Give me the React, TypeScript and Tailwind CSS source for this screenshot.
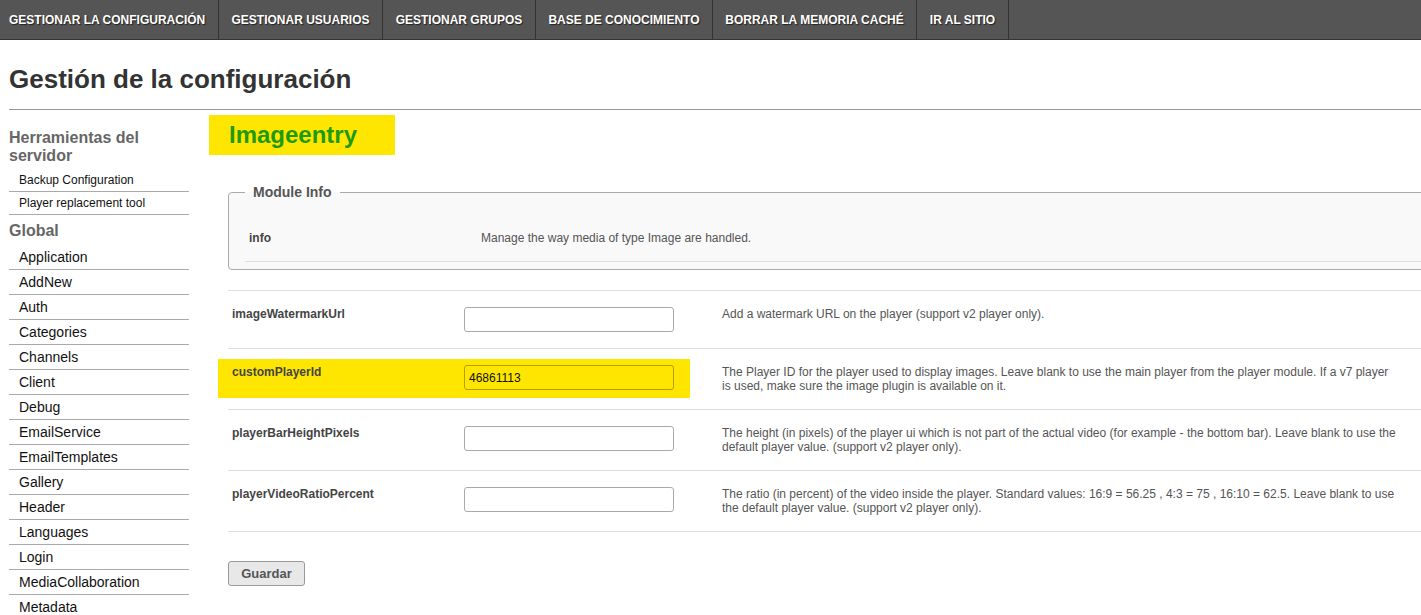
import React from "react";

const navItems: { label: string; w: string }[] = [
  { label: "GESTIONAR LA CONFIGURACIÓN", w: "w-[219px] justify-start pl-[9px]" },
  { label: "GESTIONAR USUARIOS", w: "w-[164px] justify-center" },
  { label: "GESTIONAR GRUPOS", w: "w-[153px] justify-center" },
  { label: "BASE DE CONOCIMIENTO", w: "w-[177px] justify-center" },
  { label: "BORRAR LA MEMORIA CACHÉ", w: "w-[204px] justify-center" },
  { label: "IR AL SITIO", w: "w-[92px] justify-center" },
];

const toolItems = ["Backup Configuration", "Player replacement tool"];
const globalItems = [
  "Application",
  "AddNew",
  "Auth",
  "Categories",
  "Channels",
  "Client",
  "Debug",
  "EmailService",
  "EmailTemplates",
  "Gallery",
  "Header",
  "Languages",
  "Login",
  "MediaCollaboration",
  "Metadata",
  "Moderation",
];

const rows: { label: string; value: string; desc: string; hl?: boolean }[] = [
  {
    label: "imageWatermarkUrl",
    value: "",
    desc: "Add a watermark URL on the player (support v2 player only).",
  },
  {
    label: "customPlayerId",
    value: "46861113",
    desc: "The Player ID for the player used to display images. Leave blank to use the main player from the player module. If a v7 player is used, make sure the image plugin is available on it.",
    hl: true,
  },
  {
    label: "playerBarHeightPixels",
    value: "",
    desc: "The height (in pixels) of the player ui which is not part of the actual video (for example - the bottom bar). Leave blank to use the default player value. (support v2 player only).",
  },
  {
    label: "playerVideoRatioPercent",
    value: "",
    desc: "The ratio (in percent) of the video inside the player. Standard values: 16:9 = 56.25 , 4:3 = 75 , 16:10 = 62.5. Leave blank to use the default player value. (support v2 player only).",
  },
];

export default function App() {
  return (
    <div className="w-full overflow-hidden bg-white font-['Liberation_Sans',Arial,sans-serif] text-[#333]">
      {/* Top nav */}
      <div className="flex h-[40px] bg-[#555] border-b border-[#333]">
        {navItems.map((n) => (
          <div
            key={n.label}
            className={`${n.w} flex h-full items-center border-r border-[#333] text-[12px] font-bold text-white [text-shadow:1px_1px_1px_#222] whitespace-nowrap`}
          >
            {n.label}
          </div>
        ))}
      </div>

      <div className="pl-[9px]">
        <h1 className="mt-[24px] text-[26px] leading-[30px] font-bold text-[#333]">
          Gestión de la configuración
        </h1>
        <div className="mt-[15px] h-px bg-[#999]" />

        <div className="flex">
          {/* Sidebar */}
          <div className="w-[180px] shrink-0 pt-[19px]">
            <div className="text-[16px] leading-[18px] font-bold text-[#666]">
              Herramientas del servidor
            </div>
            <div className="mt-[4px]">
              {toolItems.map((t) => (
                <div
                  key={t}
                  className="flex h-[23px] items-center border-b border-[#aaa] pl-[10px] text-[12px] text-[#111]"
                >
                  {t}
                </div>
              ))}
            </div>
            <div className="mt-[7px] text-[16px] leading-[18px] font-bold text-[#666]">
              Global
            </div>
            <div className="mt-[5px]">
              {globalItems.map((t) => (
                <div
                  key={t}
                  className="flex h-[25px] items-center border-b border-[#aaa] pl-[10px] text-[14px] text-[#111]"
                >
                  {t}
                </div>
              ))}
            </div>
          </div>

          {/* Main */}
          <div className="ml-[39px] min-w-0 flex-1">
            <div className="mt-[5px] -ml-[19px] flex h-[40px] w-[186px] items-center bg-[#ffe600] pl-[20px] text-[24px] font-bold text-[#1f9a0c]">
              Imageentry
            </div>

            <fieldset className="mt-[29px] -mr-[20px] rounded-[4px] border border-[#aaa] bg-[#f9f9f9] pl-[16px] pt-[15px] pb-[7px]">
              <legend className="px-[8px] text-[14px] leading-[16px] font-bold text-[#555]">
                Module Info
              </legend>
              <div className="flex border-b border-[#ddd] py-[16px]">
                <div className="w-[236px] shrink-0 pl-[4px] text-[12px] leading-[14px] font-bold text-[#444]">
                  info
                </div>
                <div className="text-[12px] leading-[14px] text-[#555]">
                  Manage the way media of type Image are handled.
                </div>
              </div>
            </fieldset>

            <div className="mt-[20px] border-t border-[#ddd]">
              {rows.map((r) => (
                <div
                  key={r.label}
                  className="relative flex border-b border-[#ddd] py-[16px]"
                >
                  {r.hl && (
                    <div className="absolute -left-[10px] top-[10px] h-[39px] w-[472px] bg-[#ffe600]" />
                  )}
                  <div className="relative w-[232px] shrink-0 pl-[4px] text-[12px] leading-[14px] font-bold text-[#444]">
                    {r.label}
                  </div>
                  <div className="relative w-[258px] shrink-0 px-[4px]">
                    <input
                      readOnly
                      value={r.value}
                      className={`block h-[25px] w-[210px] rounded-[3px] border px-[4px] text-[12px] text-[#111] outline-none ${
                        r.hl ? "border-[#b0a000] bg-transparent" : "border-[#aaa] bg-white"
                      }`}
                    />
                  </div>
                  <div className="relative w-[686px] shrink-0 px-[4px] text-[12px] leading-[14px] text-[#555]">
                    {r.desc}
                  </div>
                </div>
              ))}
            </div>

            <button className="mt-[29px] h-[25px] w-[77px] rounded-[3px] border border-[#999] bg-[#e8e8e8] text-[13px] font-bold text-[#555]">
              Guardar
            </button>
            <div className="h-[40px]" />
          </div>
        </div>
      </div>
    </div>
  );
}
